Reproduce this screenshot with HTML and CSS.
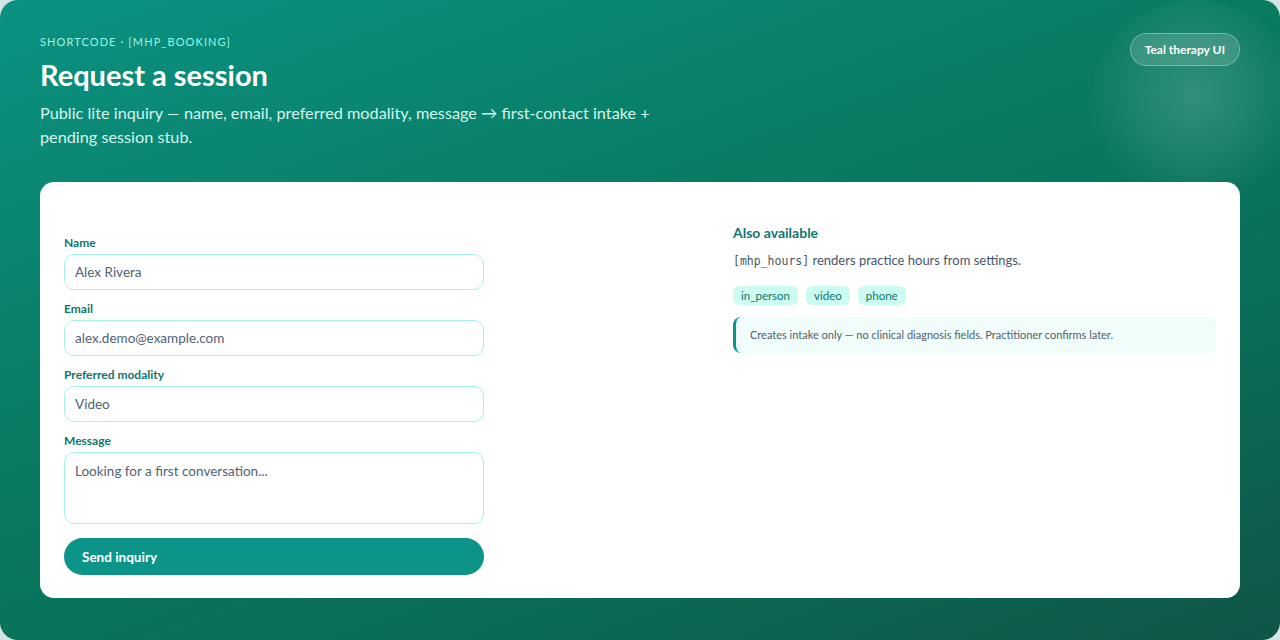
FILE: index.html
```html
<!DOCTYPE html>
<html lang="en">
<head>
  <meta charset="UTF-8">
  <title>Request a session</title>
  <link rel="stylesheet" href="styles.css">
</head>
<body>

<div class="shell">
  <div class="glow"></div>

  <header class="hero">
    <div class="hero-text">
      <div class="eyebrow">SHORTCODE · [MHP_BOOKING]</div>
      <h1>Request a session</h1>
      <p class="lead">Public lite inquiry — name, email, preferred modality, message → first-contact intake + pending session stub.</p>
    </div>
    <span class="theme-badge">Teal therapy UI</span>
  </header>

  <section class="card">
    <form class="booking-form" onsubmit="return false;">
      <label for="name">Name</label>
      <input id="name" type="text" value="Alex Rivera">

      <label for="email">Email</label>
      <input id="email" type="email" value="alex.demo@example.com">

      <label for="modality">Preferred modality</label>
      <input id="modality" type="text" value="Video">

      <label for="message">Message</label>
      <textarea id="message">Looking for a first conversation...</textarea>

      <button type="submit">Send inquiry</button>
    </form>

    <aside class="side">
      <h3>Also available</h3>
      <p><code>[mhp_hours]</code> renders practice hours from settings.</p>
      <div class="chips">
        <span class="chip">in_person</span>
        <span class="chip">video</span>
        <span class="chip">phone</span>
      </div>
      <div class="note">Creates intake only — no clinical diagnosis fields. Practitioner confirms later.</div>
    </aside>
  </section>
</div>

</body>
</html>
```

FILE: styles.css
```css
body {
  margin: 0;
  background: #d3e5e5;
  font-family: 'Lato', 'Noto Sans', sans-serif;
}
.shell {
  position: relative;
  height: 640px;
  box-sizing: border-box;
  padding: 35px 40px 40px;
  border-radius: 18px;
  overflow: hidden;
  background: linear-gradient(160deg, #0c9282 0%, #087c63 40%, #0a6d57 70%, #0f5548 100%);
}
.glow {
  position: absolute;
  top: 0;
  right: -20px;
  width: 210px;
  height: 210px;
  border-radius: 50%;
  background: radial-gradient(circle at 50% 45%, rgba(255,255,255,0.17) 0%, rgba(255,255,255,0.08) 40%, rgba(255,255,255,0) 70%);
}
.hero {
  position: relative;
  display: flex;
  justify-content: space-between;
  align-items: flex-start;
}
.eyebrow {
  font-size: 11px;
  letter-spacing: 1.1px;
  color: #99f6e4;
}
.hero h1 {
  margin: 9px 0 9px;
  font-size: 29px;
  font-weight: 700;
  color: #ffffff;
}
.lead {
  margin: 0;
  max-width: 640px;
  font-size: 16.25px;
  line-height: 24px;
  color: #d4f5ec;
}
.theme-badge {
  margin-top: -2px;
  padding: 8px 14px;
  border-radius: 999px;
  border: 1px solid rgba(255,255,255,0.3);
  background: rgba(255,255,255,0.14);
  color: #ffffff;
  font-size: 12px;
  font-weight: 700;
}
.card {
  position: relative;
  margin-top: 33px;
  background: #ffffff;
  border-radius: 14px;
  padding: 40px 24px 23px;
  display: grid;
  grid-template-columns: 645px 1fr;
  gap: 24px;
}
.booking-form {
  display: flex;
  flex-direction: column;
  width: 420px;
  padding-top: 13px;
}
.booking-form label {
  font-size: 12px;
  line-height: 15px;
  font-weight: 700;
  color: #0f766e;
  margin-bottom: 4px;
}
.booking-form input,
.booking-form textarea {
  box-sizing: border-box;
  width: 100%;
  height: 36px;
  margin-bottom: 11px;
  padding: 0 10px;
  border: 1px solid #a5f3e4;
  border-radius: 10px;
  font-family: inherit;
  font-size: 13.5px;
  color: #526275;
  outline: none;
}
.booking-form textarea {
  height: 72px;
  padding: 10px;
  resize: none;
  margin-bottom: 14px;
}
.booking-form button {
  height: 37px;
  border: none;
  border-radius: 999px;
  background: #0d9488;
  color: #ffffff;
  font-family: inherit;
  font-size: 13.5px;
  font-weight: 700;
  text-align: left;
  padding: 0 18px;
}
.side h3 {
  margin: 2px 0 11px;
  font-size: 14px;
  color: #0f766e;
}
.side p {
  margin: 0 0 18px;
  font-size: 13px;
  color: #475569;
}
.side code {
  font-family: 'DejaVu Sans Mono', monospace;
  font-size: 11.5px;
}
.chips {
  display: flex;
  gap: 8px;
  margin-bottom: 12px;
}
.chip {
  padding: 3px 8px;
  border-radius: 6px;
  background: #ccfbf1;
  color: #0f766e;
  font-size: 11.5px;
}
.note {
  padding: 10px 14px;
  border-left: 3px solid #0d9488;
  border-radius: 8px;
  background: #f0fdfa;
  color: #52606d;
  font-size: 11px;
  line-height: 16px;
}
```
